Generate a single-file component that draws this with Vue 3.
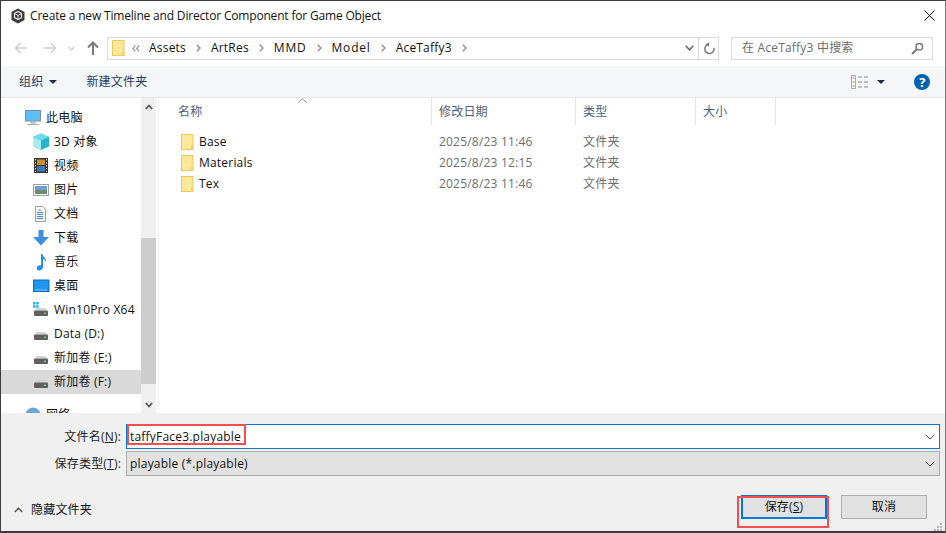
<script setup>
const crumbs = [
  { name: 'Assets' },
  { name: 'ArtRes' },
  { name: 'MMD', wide: true },
  { name: 'Model', wide: true },
  { name: 'AceTaffy3' }
]
const columns = [
  { label: '名称', width: 273 },
  { label: '修改日期', width: 144 },
  { label: '类型', width: 120 },
  { label: '大小', width: 80 }
]
const files = [
  { name: 'Base', date: '2025/8/23 11:46', type: '文件夹' },
  { name: 'Materials', date: '2025/8/23 12:15', type: '文件夹' },
  { name: 'Tex', date: '2025/8/23 11:46', type: '文件夹' }
]
const tree = [
  { label: '此电脑', icon: 'pc', top: true },
  { label: '3D 对象', icon: 'cube' },
  { label: '视频', icon: 'film' },
  { label: '图片', icon: 'pic' },
  { label: '文档', icon: 'doc' },
  { label: '下载', icon: 'down' },
  { label: '音乐', icon: 'music' },
  { label: '桌面', icon: 'desk' },
  { label: 'Win10Pro X64', icon: 'win' },
  { label: 'Data (D:)', icon: 'drive' },
  { label: '新加卷 (E:)', icon: 'drive' },
  { label: '新加卷 (F:)', icon: 'drive', selected: true },
  { label: '网络', icon: 'net', top: true, network: true }
]
</script>

<template>
  <div class="win">
    <header class="title">
      <svg class="unity" width="16" height="16" viewBox="0 0 16 16">
        <path d="M8 0.5 14.5 4v8L8 15.5 1.5 12V4z" fill="#3a3a3a" />
        <path d="M8 3.5 11.5 5.5v4L8 11.5 4.5 9.5v-4z" fill="none" stroke="#ddd" stroke-width="1.3" />
        <path d="M8 7.5V11M8 7.5 4.8 5.7M8 7.5l3.2-1.8" stroke="#ddd" stroke-width="1" fill="none" />
      </svg>
      <span class="title-text">Create a new Timeline and Director Component for Game Object</span>
      <svg class="close" width="11" height="11" viewBox="0 0 11 11">
        <path d="M.5.5l10 10M10.5.5l-10 10" stroke="#111" stroke-width="1" />
      </svg>
    </header>

    <div class="nav">
      <div class="nav-btns">
        <svg width="13" height="12" viewBox="0 0 13 12"><path d="M13 6H2M6.500 1 1.500 6l5 5" fill="none" stroke="#d0d0d0" stroke-width="1.700" /></svg>
        <svg class="fwd" width="13" height="12" viewBox="0 0 13 12"><path d="M0 6h11M6.500 1l5 5-5 5" fill="none" stroke="#d0d0d0" stroke-width="1.700" /></svg>
        <svg class="hist" width="7" height="5" viewBox="0 0 7 5"><path d="M.5.500 3.500 4l3-3.500" fill="none" stroke="#d0d0d0" stroke-width="1.200" /></svg>
        <svg class="up" width="12" height="14" viewBox="0 0 12 14"><path d="M6 14V2M1 6.500l5-5 5 5" fill="none" stroke="#7a7a7a" stroke-width="2" /></svg>
      </div>
      <div class="address">
        <svg class="addr-folder" width="13" height="16" viewBox="0 0 13 16">
          <rect x=".5" y=".5" width="11.500" height="15" fill="#fde89a" stroke="#eec95c" />
          <path d="M10 15.500v-4h2.500v4z" fill="#f3d271" />
        </svg>
        <svg class="chev-double" width="8" height="7" viewBox="0 0 8 7"><path d="M3.500.6.800 3.500l2.700 2.900M7.300.6 4.600 3.500l2.700 2.900" fill="none" stroke="#8a8a8a" stroke-width="1.100" /></svg>
        <template v-for="c in crumbs" :key="c.name">
          <span class="crumb" :class="{ wide: c.wide }">{{ c.name }}</span>
          <svg class="sep" width="5" height="8" viewBox="0 0 5 8"><path d="M.8.800 4 4 .8 7.200" fill="none" stroke="#8a8a8a" stroke-width="1.300" /></svg>
        </template>
        <svg class="addr-drop" width="9" height="6" viewBox="0 0 9 6"><path d="M.7.800 4.500 4.800 8.300.8" fill="none" stroke="#666" stroke-width="1.500" /></svg>
        <div class="refresh">
          <svg width="12" height="13" viewBox="0 0 12 13"><path d="M3 3.300a4.600 4.600 0 1 0 6 0" fill="none" stroke="#777" stroke-width="1.500" transform="rotate(35 6 7.500)" /><path d="M6 .2v4.500L2.600 2.500z" fill="#777" /></svg>
        </div>
      </div>
      <div class="search">
        <span>在 AceTaffy3 中搜索</span>
        <svg width="13" height="13" viewBox="0 0 13 13"><circle cx="8.300" cy="4.700" r="3.300" fill="none" stroke="#777" stroke-width="1.500" /><path d="M5.800 7.200 1 12" stroke="#777" stroke-width="2" /></svg>
      </div>
    </div>

    <div class="cmd">
      <span class="cmd-item">组织</span>
      <span class="caret"></span>
      <span class="cmd-item new">新建文件夹</span>
      <svg class="views" width="17" height="14" viewBox="0 0 17 14">
        <rect x=".5" y=".5" width="4" height="13" fill="#fff" stroke="#aaa" />
        <path d="M1.500 3h2M1.500 7h2M1.500 11h2" stroke="#c0504d" />
        <path d="M7 2h4M13 2h4M7 7h4M13 7h4M7 12h4M13 12h4" stroke="#8a8a8a" />
      </svg>
      <span class="caret views-caret"></span>
      <span class="help">?</span>
    </div>

    <div class="content">
      <nav class="tree">
        <div v-for="t in tree" :key="t.label" class="tree-row" :class="{ selected: t.selected, network: t.network }">
          <span class="tree-icon" :class="{ shallow: t.top }">
            <svg width="17" height="18" viewBox="0 0 17 18">
              <template v-if="t.icon === 'pc'">
                <rect x=".5" y="1.500" width="15" height="10.500" fill="#5cc0f5" stroke="#7a8a9a" />
                <path d="M6 12h4v2H6zM2.500 15.500h11" stroke="#9aa8b4" fill="#c7d2da" />
              </template>
              <template v-else-if="t.icon === 'cube'">
                <path d="M8 .5l8 3.500v9.500l-8 3.500-8-3.500V4z" fill="#25b5d0" />
                <path d="M8 .5 16 4 8 7.500 0 4z" fill="#6fdcea" />
                <path d="M0 4l8 3.500V17L0 13.500z" fill="#a8ecef" />
              </template>
              <template v-else-if="t.icon === 'film'">
                <rect x="1" y="1" width="14" height="15" fill="#333" />
                <rect x="4" y="2.500" width="8" height="5.500" fill="#c9902f" />
                <rect x="4" y="9" width="8" height="5.500" fill="#3c78c0" />
                <path d="M2.500 2v13M13.500 2v13" stroke="#ddd" stroke-dasharray="1.500 1.500" />
              </template>
              <template v-else-if="t.icon === 'pic'">
                <rect x=".5" y="3.500" width="15" height="11" fill="#fff" stroke="#a0a0a0" />
                <rect x="2" y="5" width="12" height="4" fill="#6d9fd0" />
                <rect x="2" y="9" width="12" height="4" fill="#6a8c6a" />
              </template>
              <template v-else-if="t.icon === 'doc'">
                <path d="M2.500 1.500h7l3 3v12h-10z" fill="#fff" stroke="#a0a0a0" />
                <path d="M5 5h3M4 7.500h6M4 9.500h6M4 11.500h6M4 13.500h6" stroke="#4d88c4" />
              </template>
              <template v-else-if="t.icon === 'down'">
                <path d="M5.500 1h5v7H16l-8 8.500L0 8h5.500z" fill="#3a8fdc" />
              </template>
              <template v-else-if="t.icon === 'music'">
                <path d="M8 1h1.500c.3 3 4 4 3.500 8-.8-2-2-3-3-3v8c0 2-2 3.500-4 3.500S3.500 16 4 14.500 6 12 8 12.500z" fill="#1d8fe8" />
              </template>
              <template v-else-if="t.icon === 'desk'">
                <rect x=".5" y="3" width="15.500" height="11.500" fill="#1e96f0" stroke="#0b6cc0" />
                <path d="M2 13h12" stroke="#7cc6f8" />
              </template>
              <template v-else-if="t.icon === 'net'">
                <circle cx="8" cy="9" r="7.500" fill="#6da7d8" />
                <path d="M1 14h14v3H1z" fill="#9cb0bf" />
              </template>
              <template v-else>
                <template v-if="t.icon === 'win'">
                  <path d="M0 1h2.500v2.500H0zM3.200 1h2.500v2.500H3.200zM0 4.200h2.500v2.500H0zM3.200 4.200h2.500v2.500H3.200z" fill="#1fb4ee" />
                </template>
                <path d="M2 9.500 3.500 7h9L14 9.500z" fill="#d4d4d4" />
                <rect x="1" y="9.500" width="14" height="5.500" rx="1" fill="#5f5f5f" />
                <rect x="11" y="11.500" width="2" height="1.500" fill="#5ddc5d" />
              </template>
            </svg>
          </span>
          <span class="tree-label">{{ t.label }}</span>
        </div>
      </nav>

      <div class="scrollbar">
        <svg class="sb-arrow" width="8" height="6" viewBox="0 0 8 6"><path d="M.8 5 4 1.500 7.200 5" fill="none" stroke="#555" stroke-width="1.800" /></svg>
        <div class="sb-thumb"></div>
        <svg class="sb-arrow sb-end" width="8" height="6" viewBox="0 0 8 6"><path d="M.8 1 4 4.500 7.200 1" fill="none" stroke="#555" stroke-width="1.800" /></svg>
      </div>

      <main class="list">
        <div class="list-head">
          <div v-for="c in columns" :key="c.label" class="col" :style="{ width: c.width + 'px' }">{{ c.label }}</div>
          <svg class="sort" width="9" height="5" viewBox="0 0 9 5"><path d="M.5 4.500 4.500.8l4 3.700" fill="none" stroke="#888" /></svg>
        </div>
        <div class="rows">
          <div v-for="f in files" :key="f.name" class="file">
            <svg class="f-icon" width="13" height="16" viewBox="0 0 13 16">
              <rect x=".5" y=".5" width="11.500" height="15" fill="#fde89a" stroke="#eec95c" />
              <path d="M10 15.500v-4h2.500v4z" fill="#f3d271" />
            </svg>
            <span class="f-name">{{ f.name }}</span>
            <span class="f-date">{{ f.date }}</span>
            <span class="f-type">{{ f.type }}</span>
          </div>
        </div>
      </main>
    </div>

    <footer class="panel">
      <div class="field first">
        <label>文件名(<u>N</u>):</label>
        <div class="input active">
          <span>taffyFace3.playable</span>
          <svg width="10" height="6" viewBox="0 0 10 6"><path d="M.7.700 5 5 9.300.7" fill="none" stroke="#555" /></svg>
        </div>
      </div>
      <div class="field">
        <label>保存类型(<u>T</u>):</label>
        <div class="input select">
          <span>playable (*.playable)</span>
          <svg width="10" height="6" viewBox="0 0 10 6"><path d="M.7.700 5 5 9.300.7" fill="none" stroke="#555" /></svg>
        </div>
      </div>
      <div class="actions">
        <div class="hide">
          <svg width="9" height="6" viewBox="0 0 9 6"><path d="M.8 5 4.500 1.300 8.200 5" fill="none" stroke="#555" stroke-width="1.500" /></svg>
          <span>隐藏文件夹</span>
        </div>
        <button class="btn primary">保存(<u>S</u>)</button>
        <button class="btn">取消</button>
      </div>
      <svg class="grip" width="8" height="8" viewBox="0 0 8 8">
        <path d="M6 0h2v2H6zM3 3h2v2H3zM6 3h2v2H6zM0 6h2v2H0zM3 6h2v2H3zM6 6h2v2H6z" fill="#b5b5b5" />
      </svg>
    </footer>

    <div class="mark mark-name"></div>
    <div class="mark mark-save"></div>
  </div>
</template>

<style>
html, body { margin: 0; overflow: hidden; }
</style>

<style scoped>
.win {
  position: relative;
  box-sizing: border-box;
  width: 946px;
  height: 533px;
  display: flex;
  flex-direction: column;
  overflow: hidden;
  background: #fff;
  border: 1px solid #3c3c3c;
  border-right-color: #777;
  border-bottom-width: 2px;
  font: 12px/16px "Open Sans", "Noto Sans CJK SC", sans-serif;
  letter-spacing: 0.2px;
  color: #111;
}
.title {
  height: 29px;
  flex: none;
  display: flex;
  align-items: center;
  padding: 0 10px 0 9px;
}
.title-text { margin-left: 4px; flex: 1; white-space: nowrap; letter-spacing: -0.18px; }
.nav {
  height: 36px;
  flex: none;
  display: flex;
  align-items: center;
  box-sizing: border-box;
  padding-left: 13px;
}
.nav-btns { width: 93px; display: flex; align-items: center; }
.fwd { margin-left: 17px; }
.hist { margin-left: 11px; }
.up { margin-left: 12px; }
.address {
  box-sizing: border-box;
  width: 612px;
  height: 23px;
  border: 1px solid #d9d9d9;
  display: flex;
  align-items: center;
  padding-left: 4px;
  position: relative;
}
.addr-folder { flex: none; }
.chev-double { margin: 0 9px 0 7px; flex: none; }
.crumb { color: #111; white-space: nowrap; }
.crumb.wide { letter-spacing: 0.8px; }
.sep { margin: 0 10px; flex: none; }
.addr-drop { margin-left: auto; margin-right: 4px; }
.refresh {
  width: 19px;
  height: 21px;
  border-left: 1px solid #d9d9d9;
  display: flex;
  align-items: center;
  justify-content: center;
}
.search {
  box-sizing: border-box;
  width: 202px;
  height: 23px;
  margin-left: 12px;
  border: 1px solid #d9d9d9;
  display: flex;
  align-items: center;
  justify-content: space-between;
  padding: 0 8px 0 10px;
  color: #6d6d6d;
}
.cmd {
  height: 31px;
  flex: none;
  background: #f5f6f7;
  border-bottom: 1px solid #e5e5e5;
  display: flex;
  align-items: center;
  padding-left: 18px;
  color: #1e3a5f;
}
.caret {
  width: 0;
  height: 0;
  border: 4px solid transparent;
  border-top: 4px solid #1b2c4d;
  border-bottom: 0;
  margin-left: 6px;
}
.new { margin-left: 29px; }
.views { margin-left: 704px; }
.views-caret { margin-left: 9px; }
.help {
  width: 16px;
  height: 16px;
  margin-left: 29px;
  border-radius: 50%;
  background: #0063b1;
  color: #fff;
  font-weight: 700;
  font-size: 13px;
  line-height: 16px;
  text-align: center;
}
.content { flex: 1; min-height: 0; display: flex; }
.tree {
  width: 140px;
  flex: none;
  overflow: hidden;
  padding-top: 8px;
  box-sizing: border-box;
}
.tree-row {
  height: 24px;
  display: flex;
  align-items: center;
  white-space: nowrap;
  flex: none;
}
.tree-row.selected { background: #d9d9d9; }
.tree-row.network { margin-top: 9px; }
.tree-icon { display: flex; margin-left: 32px; width: 21px; flex: none; }
.tree-icon.shallow { margin-left: 24px; width: 21px; }
.scrollbar {
  width: 15px;
  flex: none;
  background: #f0f0f0;
  display: flex;
  flex-direction: column;
  align-items: center;
  margin-right: 2px;
  position: relative;
}
.sb-arrow { margin-top: 6px; }
.sb-end { margin-top: auto; margin-bottom: 5px; }
.sb-thumb {
  position: absolute;
  left: 0;
  right: 0;
  top: 140px;
  height: 146px;
  background: #cdcdcd;
}
.list { flex: 1; min-width: 0; position: relative; border-left: 1px solid #f0f0f0; }
.list-head { display: flex; height: 27px; position: relative; }
.col {
  box-sizing: border-box;
  height: 27px;
  border-right: 1px solid #e5e5e5;
  padding: 6px 0 0 7px;
  color: #4c607a;
}
.col:first-child { padding-left: 19px; }
.sort { position: absolute; left: 139px; top: 0; }
.rows { padding-top: 6px; }
.file { height: 21px; display: flex; align-items: center; }
.f-icon { margin-left: 22px; flex: none; }
.f-name { margin-left: 5px; width: 240px; }
.f-date { width: 144px; color: #6d6d6d; }
.f-type { color: #6d6d6d; }
.panel {
  height: 118px;
  flex: none;
  box-sizing: border-box;
  background: #f0f0f0;
  padding-top: 11px;
  position: relative;
}
.field { display: flex; align-items: center; height: 25px; margin-bottom: 2px; padding-right: 5px; }
.field label { width: 120px; text-align: right; margin-right: 5px; color: #222; flex: none; }
.input {
  box-sizing: border-box;
  flex: 1;
  height: 25px;
  display: flex;
  align-items: center;
  justify-content: space-between;
  padding: 0 4px 0 3px;
  border: 1px solid #adadad;
}
.input.active { background: #fff; border-color: #0078d7; }
.input.select { background: #e1e1e1; }
.actions { display: flex; align-items: center; margin-top: 19px; height: 24px; padding-left: 13px; }
.hide { display: flex; align-items: center; gap: 8px; width: 727px; margin-top: 5px; }
.btn {
  box-sizing: border-box;
  width: 86px;
  height: 24px;
  border: 1px solid #adadad;
  background: #e1e1e1;
  font: inherit;
  letter-spacing: inherit;
  color: #111;
  padding: 0;
}
.btn.primary { border: 2px solid #0078d7; margin-right: 14px; }
.grip { position: absolute; right: 3px; bottom: 0; }
.mark { position: absolute; box-sizing: border-box; border: 2px solid #f25050; }
.mark-name { left: 126px; top: 423px; width: 119px; height: 21px; }
.mark-save { left: 736px; top: 495px; width: 92px; height: 32px; }
</style>
